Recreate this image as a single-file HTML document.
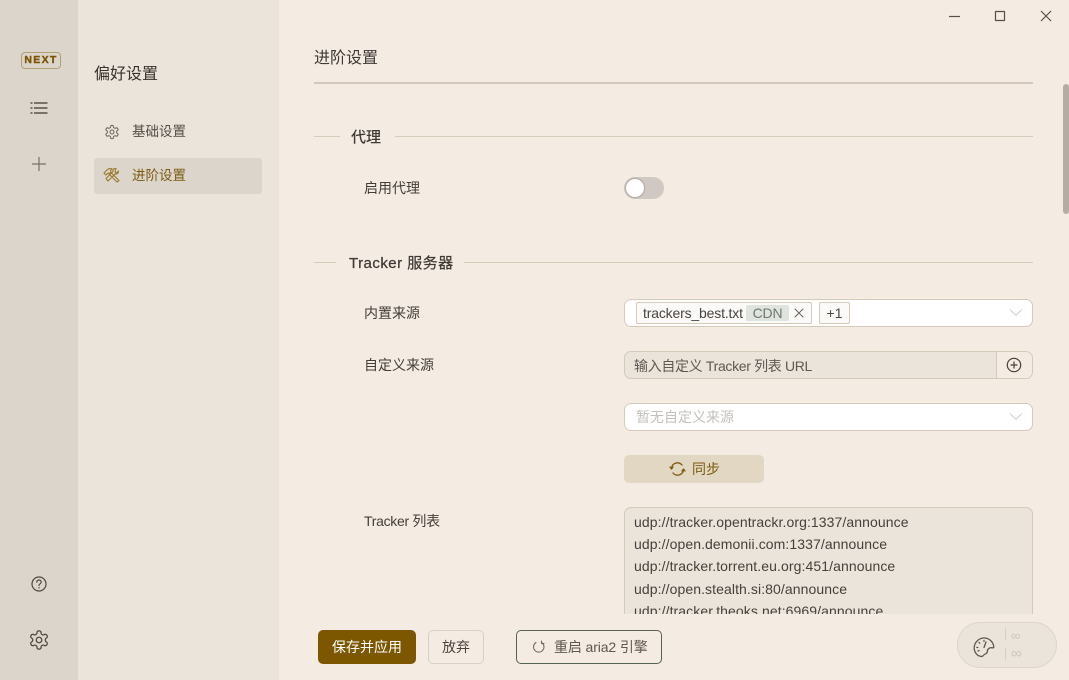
<!DOCTYPE html>
<html lang="zh"><head><meta charset="utf-8"><title>偏好设置</title>
<style>
html,body{margin:0;padding:0;width:1069px;height:680px;overflow:hidden;background:#f4ebe2}
body{font-family:"Liberation Sans","Noto Sans CJK SC",sans-serif;font-size:14px;color:#3f3a35;position:relative}
.a{position:absolute;white-space:nowrap}
svg{position:absolute;fill:none;stroke:currentColor;stroke-linecap:round;stroke-linejoin:round}
.line{position:absolute;height:1px;background:#d8cbbc}
.box{position:absolute;box-sizing:border-box;border:1px solid #d5c9ba;border-radius:7px;background:#fff}
.lbl{position:absolute;left:364px;line-height:20px;font-size:14px;color:#423d38;white-space:nowrap}
</style></head><body>
<div class="a" style="left:0;top:0;width:78px;height:680px;background:#dcd5cc"></div>
<div class="a" style="left:78px;top:0;width:201px;height:680px;background:#ebe4db"></div>

<div class="a" style="left:21px;top:52px;width:38px;height:15px;border:1px solid #b39f72;border-radius:4px;font:bold 10.500px/15px 'Liberation Sans',sans-serif;letter-spacing:1.300px;color:#7d5600;text-align:center;-webkit-text-stroke:.4px #7d5600">NEXT</div>
<svg style="left:30px;top:99px;color:#5a524a;stroke-linecap:butt" width="18" height="18" viewBox="0 0 18 18" stroke-width="1.400"><path d="M4 4h13.500M4 9h13.500M4 14h13.500M.5 4h2M.5 9h2M.5 14h2"/></svg>
<svg style="left:31px;top:156px;color:#78706a" width="16" height="16" viewBox="0 0 16 16" stroke-width="1.200"><path d="M8 1.500v13M1.500 8h13"/></svg>
<svg style="left:31px;top:576px;color:#4f4840" width="16" height="16" viewBox="0 0 16 16" stroke-width="1.200"><circle cx="8" cy="8" r="7"/><path d="M5.800 6.200c0-1.300 1-2.200 2.200-2.200s2.200.9 2.200 2.100c0 1.700-2.200 1.700-2.200 3.400M8 11.600v.4"/></svg>
<svg style="left:28px;top:629px;color:#4f4840" width="22" height="22" viewBox="0 0 24 24" stroke-width="1.400"><circle cx="12" cy="12" r="3"/><path d="M12.220 2h-.44a2 2 0 0 0-2 2v.18a2 2 0 0 1-1 1.730l-.43.250a2 2 0 0 1-2 0l-.15-.08a2 2 0 0 0-2.730.730l-.22.380a2 2 0 0 0 .730 2.730l.15.100a2 2 0 0 1 1 1.720v.510a2 2 0 0 1-1 1.740l-.15.090a2 2 0 0 0-.73 2.730l.22.380a2 2 0 0 0 2.730.730l.15-.08a2 2 0 0 1 2 0l.43.250a2 2 0 0 1 1 1.730V20a2 2 0 0 0 2 2h.44a2 2 0 0 0 2-2v-.18a2 2 0 0 1 1-1.730l.43-.25a2 2 0 0 1 2 0l.15.08a2 2 0 0 0 2.730-.730l.22-.39a2 2 0 0 0-.73-2.730l-.15-.08a2 2 0 0 1-1-1.740v-.5a2 2 0 0 1 1-1.740l.15-.09a2 2 0 0 0 .73-2.730l-.22-.38a2 2 0 0 0-2.730-.73l-.15.08a2 2 0 0 1-2 0l-.43-.25a2 2 0 0 1-1-1.730V4a2 2 0 0 0-2-2z"/></svg>

<div class="a" style="left:94px;top:64px;font-size:16px;line-height:22px;color:#37322d">偏好设置</div>
<svg style="left:104px;top:124px;color:#6a625a" width="16" height="16" viewBox="0 0 24 24" stroke-width="1.500"><circle cx="12" cy="12" r="3"/><path d="M12.220 2h-.44a2 2 0 0 0-2 2v.18a2 2 0 0 1-1 1.730l-.43.250a2 2 0 0 1-2 0l-.15-.08a2 2 0 0 0-2.730.730l-.22.380a2 2 0 0 0 .730 2.730l.15.100a2 2 0 0 1 1 1.720v.510a2 2 0 0 1-1 1.740l-.15.090a2 2 0 0 0-.73 2.730l.22.380a2 2 0 0 0 2.730.730l.15-.08a2 2 0 0 1 2 0l.43.250a2 2 0 0 1 1 1.730V20a2 2 0 0 0 2 2h.44a2 2 0 0 0 2-2v-.18a2 2 0 0 1 1-1.730l.43-.25a2 2 0 0 1 2 0l.15.08a2 2 0 0 0 2.730-.730l.22-.39a2 2 0 0 0-.73-2.730l-.15-.08a2 2 0 0 1-1-1.740v-.5a2 2 0 0 1 1-1.740l.15-.09a2 2 0 0 0 .73-2.730l-.22-.38a2 2 0 0 0-2.730-.73l-.15.08a2 2 0 0 1-2 0l-.43-.25a2 2 0 0 1-1-1.730V4a2 2 0 0 0-2-2z"/></svg>
<div class="a" style="left:132px;top:122px;line-height:20px;font-size:13.500px;color:#544d46">基础设置</div>
<div class="a" style="left:94px;top:158px;width:168px;height:36px;background:#dcd5cb;border-radius:3px"></div>
<svg style="left:103px;top:167px;color:#9a7a30" width="18" height="17" viewBox="0 0 18 17" stroke-width="1.100"><path d="M1 6l3.500-3.500C6 1.500 8 1.500 9 2L7.500 3.500 8 5 6.500 6.500 5 6 3 8zM6 7l8 8 2-1.500-8-8M13 1.500c-2-.5-3.500 1-3 3L3 11.500 5 14l7-7c2 .5 3.700-1 3.500-3L13.500 6 12 5z"/></svg>
<div class="a" style="left:132px;top:166px;line-height:20px;font-size:13.500px;color:#7d5a10">进阶设置</div>

<div class="a" style="left:314px;top:48px;font-size:16px;line-height:22px;color:#3f3a35">进阶设置</div>
<div class="a" style="left:314px;top:82px;width:719px;height:2px;background:#d3c8ba"></div>
<svg style="left:942px;top:6px;color:#5a4f46;stroke-linecap:butt" width="120" height="20" viewBox="0 0 120 20" stroke-width="1.200"><path d="M7 10.500h11"/><rect x="53.500" y="5.500" width="9" height="9"/><path d="M99 5l10 10M109 5l-10 10"/></svg>
<div class="a" style="left:1063px;top:84px;width:6px;height:130px;background:#b5aca3;border-radius:3px"></div>

<div class="line" style="left:314px;top:136px;width:26px"></div>
<div class="a" style="left:351px;top:127px;font-size:15px;line-height:21px;font-weight:500;color:#3f3a35">代理</div>
<div class="line" style="left:395px;top:136px;width:638px"></div>
<div class="lbl" style="top:178px">启用代理</div>
<div class="a" style="left:624px;top:177px;width:40px;height:22px;border-radius:11px;background:#d0c8c2"></div>
<div class="a" style="left:626px;top:179px;width:18px;height:18px;border-radius:50%;background:#fff;box-shadow:0 0 2px rgba(0,0,0,.4)"></div>

<div class="line" style="left:314px;top:262px;width:22px"></div>
<div class="a" style="left:349px;top:253px;font-size:15px;line-height:21px;color:#3f3a35;-webkit-text-stroke:.25px #3f3a35;letter-spacing:.47px">Tracker 服务器</div>
<div class="line" style="left:464px;top:262px;width:569px"></div>

<div class="lbl" style="top:303px">内置来源</div>
<div class="box" style="left:624px;top:299px;width:409px;height:28px"></div>
<div class="a" style="left:636px;top:302px;width:176px;height:22px;box-sizing:border-box;border:1px solid #d5c9ba;border-radius:2px;background:#fbfaf8"></div>
<div class="a" style="left:643px;top:303px;line-height:20px;font-size:14px;color:#4a443e;letter-spacing:-.17px">trackers_best.txt</div>
<div class="a" style="left:746px;top:305px;width:43px;height:16px;border-radius:2px;background:#dfe4df;text-align:center;line-height:16px;font-size:14px;color:#6f776f;letter-spacing:-.2px">CDN</div>
<svg style="left:794px;top:308px;color:#6a6560" width="10" height="10" viewBox="0 0 10 10" stroke-width="1"><path d="M1 1l8 8M9 1l-8 8"/></svg>
<div class="a" style="left:819px;top:302px;width:31px;height:22px;box-sizing:border-box;border:1px solid #d5c9ba;border-radius:2px;background:#fbfaf8;text-align:center;line-height:20px;font-size:14px;color:#4a443e">+1</div>
<svg style="left:1009px;top:309px;color:#d8d2cc" width="14" height="8" viewBox="0 0 14 8" stroke-width="1.200"><path d="M1.500 1l5.500 5.500L12.500 1"/></svg>

<div class="lbl" style="top:355px">自定义来源</div>
<div class="box" style="left:624px;top:351px;width:409px;height:28px;background:#ebe4db"></div>
<div class="a" style="left:996px;top:352px;width:36px;height:26px;background:#f4ebe2;border-left:1px solid #d5c9ba;border-radius:0 6px 6px 0;box-sizing:border-box"></div>
<div class="a" style="left:634px;top:356px;line-height:20px;font-size:14px;color:#5f5850;letter-spacing:-.33px">输入自定义 Tracker 列表 URL</div>
<svg style="left:1006px;top:357px;color:#45403a" width="16" height="16" viewBox="0 0 16 16" stroke-width="1.200"><circle cx="8" cy="8" r="6.700"/><path d="M8 5v6M5 8h6"/></svg>

<div class="box" style="left:624px;top:403px;width:409px;height:28px"></div>
<div class="a" style="left:636px;top:407px;line-height:20px;font-size:14px;color:#c4c0bb">暂无自定义来源</div>
<svg style="left:1009px;top:413px;color:#d8d2cc" width="14" height="8" viewBox="0 0 14 8" stroke-width="1.200"><path d="M1.500 1l5.500 5.500L12.500 1"/></svg>

<div class="a" style="left:624px;top:455px;width:140px;height:28px;background:#e2d7c3;border-radius:5px"></div>
<svg style="left:669px;top:461px;color:#7d5a10" width="17" height="16" viewBox="0 0 17 16" stroke-width="1.300"><path d="M2.500 7a6 6 0 0 1 10.500-3M14.500 9A6 6 0 0 1 4 12M1 6l1.500 2L4 6M13 10l1.500-2 1.500 2"/></svg>
<div class="a" style="left:692px;top:459px;line-height:20px;font-size:14px;color:#7d5a10">同步</div>

<div class="lbl" style="top:511px;letter-spacing:-.3px">Tracker 列表</div>
<div class="a" style="left:624px;top:507px;width:409px;height:120px;box-sizing:border-box;border:1px solid #d5c9ba;border-radius:7px;background:#ebe4db;padding:3px 9px;font-size:14px;line-height:22.200px;color:#45403a;letter-spacing:.09px">udp://tracker.opentrackr.org:1337/announce<br>udp://open.demonii.com:1337/announce<br>udp://tracker.torrent.eu.org:451/announce<br>udp://open.stealth.si:80/announce<br>udp://tracker.theoks.net:6969/announce</div>

<div class="a" style="left:279px;top:614px;width:790px;height:66px;background:#f4ebe2"></div>
<div class="a" style="left:318px;top:630px;width:98px;height:34px;background:#7d5600;border-radius:5px;color:#fff;text-align:center;line-height:34px;font-size:14px">保存并应用</div>
<div class="a" style="left:428px;top:630px;width:56px;height:34px;box-sizing:border-box;border:1px solid #dccfc2;border-radius:5px;text-align:center;line-height:32px;font-size:14px;color:#4a443e">放弃</div>
<div class="a" style="left:516px;top:630px;width:146px;height:34px;box-sizing:border-box;border:1px solid #56644f;border-radius:5px"></div>
<svg style="left:532px;top:640px;color:#6d6a62" width="14" height="15" viewBox="0 0 14 15" stroke-width="1.100"><path d="M9.500 2.500a5.200 5.200 0 1 1-5.500 0M9.500 1v2.500H12"/></svg>
<div class="a" style="left:554px;top:637px;line-height:20px;font-size:14px;color:#5d5850;letter-spacing:-.12px">重启 aria2 引擎</div>

<div class="a" style="left:957px;top:622px;width:100px;height:46px;box-sizing:border-box;border:1px solid #dfd6ca;border-radius:23px;background:#ebe4db"></div>
<svg style="left:973px;top:636px;color:#5f5850" width="22" height="22" viewBox="0 0 22 22" stroke-width="1.300"><path d="M5 19.500C2.500 17.500 1 14.500 1.200 11.500 1.600 6 6 2 11 2c5.500 0 9.300 4 9.800 9-.1 1-.8 1-1.500.8-2.500-.6-5 1-5 3.700 0 1.200-.5 1.800-1.500 2.200-1.200.5-2 1.200-3 2.300-.5.500-1.500.5-2.500.2z"/><path d="M11 4.500v1M6 6.500l.7.7M3.800 11.500h1M5 15l1-.5M13 6l-2 5.500"/></svg>
<div class="a" style="left:1005px;top:628px;width:1px;height:12px;background:#d8cfc3"></div>
<div class="a" style="left:1005px;top:648px;width:1px;height:12px;background:#d8cfc3"></div>
<div class="a" style="left:1011px;top:628px;font-size:13px;line-height:16px;color:#cdc6bc">∞</div>
<div class="a" style="left:1011px;top:646px;font-size:15px;line-height:16px;color:#cdc6bc">∞</div>
</body></html>
